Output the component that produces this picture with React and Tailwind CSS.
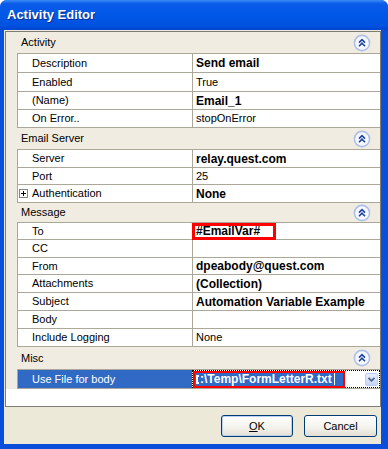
import React from "react";

function Collapse() {
  return (
    <svg width="18" height="18" viewBox="0 0 18 18">
      <circle cx="9" cy="9" r="7.6" fill="#F6F8FE" stroke="#AEC1E8" strokeWidth="1.6" />
      <path d="M6 8.6 L9 5.6 L12 8.6 M6 12.2 L9 9.2 L12 12.2" fill="none" stroke="#1E44A4" strokeWidth="1.6" />
    </svg>
  );
}

function Header({ title, h }) {
  return (
    <div className={`flex items-center justify-between pl-[15px] pr-[9px] text-[11px] text-black ${h}`}>
      <span>{title}</span>
      <Collapse />
    </div>
  );
}

function Group({ children }) {
  return (
    <div className="flex">
      <div className="w-[11px] shrink-0" />
      <div className="flex-1 border-l border-t border-[#ACA899] flex flex-col">{children}</div>
    </div>
  );
}

function Row({ name, value, bold, h, plus }) {
  return (
    <div className={`flex bg-white border-b border-[#ACA899] ${h}`}>
      <div className={`w-[174px] shrink-0 flex items-center text-[11px] ${plus ? "pl-[1px]" : "pl-[14px]"}`}>
        {plus && (
          <svg width="9" height="9" viewBox="0 0 9 9" className="mr-[4px]">
            <rect x="0.5" y="0.5" width="8" height="8" fill="#fff" stroke="#848484" />
            <path d="M2 4.5 H7 M4.5 2 V7" stroke="#000" />
          </svg>
        )}
        {name}
      </div>
      <div className={`flex-1 border-l border-[#ACA899] pl-[3px] flex items-center ${bold ? "font-bold text-[12px]" : "text-[11px]"}`}>
        {value}
      </div>
    </div>
  );
}

export default function App() {
  return (
    <div className="w-[388px] h-[449px] bg-white font-['Liberation_Sans',Arial,sans-serif]">
      <div className="w-full h-full rounded-t-[7px] bg-[#0A4FDA] flex flex-col overflow-hidden">
        <div className="h-[30px] shrink-0 flex items-center pl-[7px] bg-[linear-gradient(180deg,#3A8CF6_0%,#0A5CEA_12%,#0057E6_50%,#0052E0_85%,#0045CF_100%)]">
          <span className="text-[13px] font-bold text-white [text-shadow:1px_1px_0_#0B2A8A]">Activity Editor</span>
        </div>

        <div className="flex-1 ml-[4px] mr-[7px] mb-[5px] bg-[#ECE9D8] flex flex-col">
          <div className="ml-[1px] mt-[1px] h-[376px] border border-[#7D7D78] bg-[#F0ECE1] flex flex-col">
            <Header title="Activity" h="h-[21px]" />
            <Group>
              <Row name="Description" value="Send email" bold h="h-[19px]" />
              <Row name="Enabled" value="True" h="h-[19px]" />
              <Row name="(Name)" value="Email_1" bold h="h-[18px]" />
              <Row name="On Error.." value="stopOnError" h="h-[18px]" />
            </Group>

            <Header title="Email Server" h="h-[21px]" />
            <Group>
              <Row name="Server" value="relay.quest.com" bold h="h-[18px]" />
              <Row name="Port" value="25" h="h-[17px]" />
              <Row name="Authentication" value="None" bold plus h="h-[18px]" />
            </Group>

            <Header title="Message" h="h-[19px]" />
            <Group>
              <div className="flex bg-white border-b border-[#ACA899] h-[17px]">
                <div className="w-[174px] shrink-0 flex items-center pl-[14px] text-[11px]">To</div>
                <div className="flex-1 border-l border-[#ACA899] flex items-center">
                  <span className="-ml-[1px] w-[84px] h-[17px] shrink-0 border-[3px] border-[#FF0000] pl-[1px] flex items-center font-bold text-[12px] bg-white">
                    #EmailVar#
                  </span>
                </div>
              </div>
              <Row name="CC" value="" h="h-[18px]" />
              <Row name="From" value="dpeabody@quest.com" bold h="h-[17px]" />
              <Row name="Attachments" value="(Collection)" bold h="h-[18px]" />
              <Row name="Subject" value="Automation Variable Example" bold h="h-[18px]" />
              <Row name="Body" value="" h="h-[18px]" />
              <Row name="Include Logging" value="None" h="h-[18px]" />
            </Group>

            <Header title="Misc" h="h-[22px]" />
            <Group>
              <div className="flex bg-white border-b border-[#ACA899] h-[19px]">
                <div className="w-[174px] shrink-0 flex items-center pl-[14px] text-[11px] text-white bg-[#316AC5]">
                  Use File for body
                </div>
                <div className="flex-1 border border-dotted border-black flex items-center pr-[1px]">
                  <div className="w-[152px] h-[17px] border-2 border-[#FF0000] bg-[#316AC5] overflow-hidden flex items-center pl-[1px]">
                    <span className="w-[3px] h-[9px] border-l-2 border-t-2 border-b-2 border-white shrink-0 mr-[1px]" />
                    <span className="font-bold text-[12px] text-white whitespace-nowrap">:\Temp\FormLetterR.txt</span>
                    <span className="ml-[2px] w-[1px] h-[12px] bg-white shrink-0" />
                  </div>
                  <div className="ml-auto w-[13px] h-[13px] rounded-[2px] border border-[#B9CCF4] bg-[linear-gradient(180deg,#E6EEFD_0%,#C6D6F8_100%)] flex items-center justify-center">
                    <svg width="9" height="7" viewBox="0 0 9 7">
                      <path d="M1.5 1.8 L4.5 4.8 L7.5 1.8" fill="none" stroke="#4D6185" strokeWidth="1.8" />
                    </svg>
                  </div>
                </div>
              </div>
            </Group>
            <div className="flex-1 bg-white" />
          </div>

          <div className="flex justify-end gap-[11px] pr-[4px] mt-[8px]">
            <button className="w-[72px] h-[22px] rounded-[3px] border border-[#003C74] bg-[linear-gradient(180deg,#FFFFFF_0%,#F3F2EC_60%,#E2DED3_100%)] shadow-[inset_0_0_0_1px_#BCD0F5] text-[11px] text-black flex items-center justify-center">
              <span className="underline">O</span>K
            </button>
            <button className="w-[73px] h-[22px] rounded-[3px] border border-[#003C74] bg-[linear-gradient(180deg,#FFFFFF_0%,#F3F2EC_60%,#E2DED3_100%)] text-[11px] text-black flex items-center justify-center">
              Cancel
            </button>
          </div>
        </div>
      </div>
    </div>
  );
}
